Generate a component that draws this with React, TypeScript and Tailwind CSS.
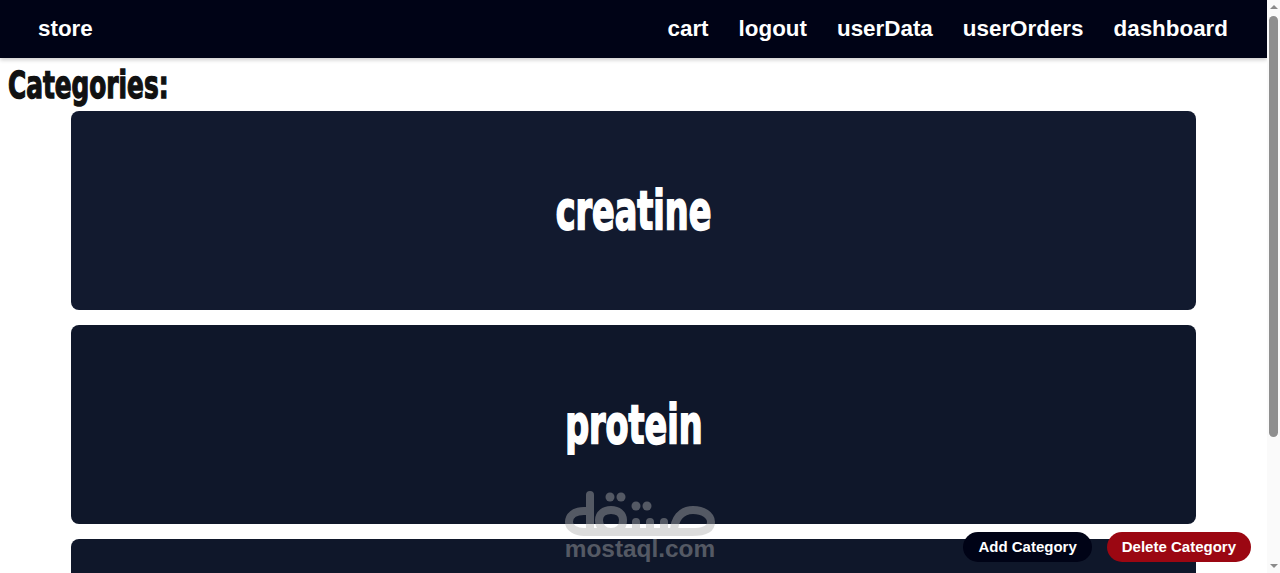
const links = ["cart", "logout", "userData", "userOrders", "dashboard"];

const categories = [
  { name: "creatine", bg: "bg-[#121a2f]" },
  { name: "protein", bg: "bg-[#0f172a]" },
  { name: "", bg: "bg-[#0f172a]" },
];

// no Impact here, so a squeezed heavy DejaVu stands in for it
const impact = "inline-block font-['DejaVu_Sans',sans-serif] font-bold";

function Watermark() {
  return (
    <div className="absolute left-[564px] top-[491px] w-[152px] flex flex-col items-center pointer-events-none text-[#b0b0b0] opacity-[0.43]">
      <svg width="152" height="47" viewBox="0 0 152 47" fill="none" stroke="currentColor" strokeWidth="8" strokeLinecap="round" strokeLinejoin="round">
        {/* logo */}
        <path d="M26 4 V39 M26 20 H20 C10 20 5 25 5 31 C5 37 12 41 20 41 H128 C141 41 147 38 147 31 C147 24 139 19 129 19 C117 19 110 28 110 41" />
        <path d="M47 41 C38 41 35 34 35 29 C35 23 40 19 47 19 C54 19 59 23 59 29 C59 35 56 41 47 41" />
        <path d="M72 31 V41 M86 31 V41 M100 31 V41" />
        <circle cx="46" cy="6" r="4.5" fill="currentColor" stroke="none" />
        <circle cx="57" cy="6" r="4.5" fill="currentColor" stroke="none" />
        <circle cx="72" cy="15" r="4.5" fill="currentColor" stroke="none" />
        <circle cx="83" cy="15" r="4.5" fill="currentColor" stroke="none" />
      </svg>
      <span className="font-['Liberation_Sans',sans-serif] font-bold text-[24.4px] leading-[24px] -mt-[1px]">mostaql.com</span>
    </div>
  );
}

export default function App() {
  return (
    <div className="relative flex h-screen overflow-hidden bg-white font-['Liberation_Sans',Arial,sans-serif]">
      <div className="flex-1 min-w-0">
        <nav className="h-[58px] bg-[#000316] shadow-[0_2px_4px_rgba(0,0,0,0.2)] flex items-center justify-between pl-[38px] pr-[39px] pb-[1px] text-white text-[22.4px] font-bold">
          <a>store</a>
          <div className="flex gap-[30px]">
            {links.map((l) => (
              <a key={l}>{l}</a>
            ))}
          </div>
        </nav>

        <h2 className={`${impact} text-[#111] text-[37px] leading-[40px] mt-[8px] ml-[8px] origin-left scale-x-[0.67] [-webkit-text-stroke:1.4px_#111]`}>Categories:</h2>

        <div className="flex flex-col gap-[15px] mt-[5px] mx-[71px]">
          {categories.map((c, i) => (
            <div key={i} className={`${c.bg} h-[199px] shrink-0 rounded-lg flex items-center justify-center`}>
              <span className={`${impact} text-white text-[54px] scale-x-[0.62] [-webkit-text-stroke:2px_#fff]`}>{c.name}</span>
            </div>
          ))}
        </div>
      </div>

      {/* scrollbar */}
      <div className="w-[13px] shrink-0 bg-[#fafafa] flex flex-col items-center justify-between py-[5px]">
        <div className="w-0 h-0 border-x-[4px] border-x-transparent border-b-[4px] border-b-[#8a8a8a]" />
        <div className="w-[9px] h-[421px] rounded-full bg-[#8f8f8f] mt-[7px] mb-auto" />
        <div className="w-0 h-0 border-x-[4px] border-x-transparent border-t-[4px] border-t-[#8a8a8a]" />
      </div>

      <Watermark />

      <div className="absolute right-[29px] bottom-[11px] flex gap-[15px] text-white text-[15px] font-bold">
        <button className="h-[30px] px-[15px] rounded-[15px] bg-[#000316]">Add Category</button>
        <button className="h-[30px] px-[15px] rounded-[15px] bg-[#9b0712]">Delete Category</button>
      </div>
    </div>
  );
}
